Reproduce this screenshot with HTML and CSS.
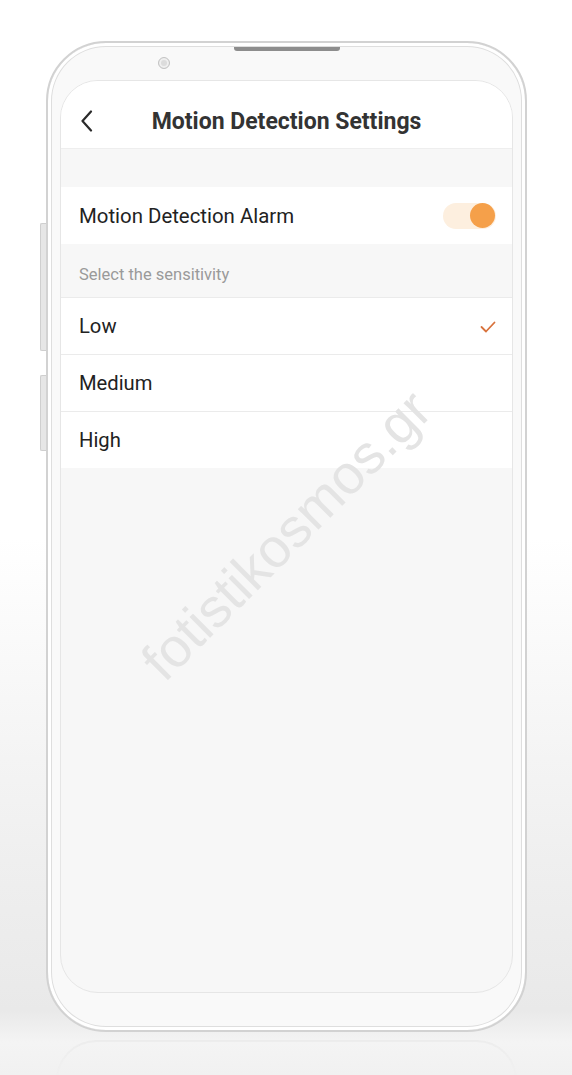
FILE: index.html
```html
<!DOCTYPE html>
<html lang="en">
<head>
<meta charset="UTF-8" />
<meta name="viewport" content="width=device-width, initial-scale=1" />
<title>Motion Detection Settings</title>
<link rel="stylesheet" href="styles.css">
</head>
<body>

<div class="phone">
  <div class="side-btn side-btn-top"></div>
  <div class="side-btn side-btn-bottom"></div>
  <div class="speaker"></div>
  <div class="camera"></div>

  <div class="screen">
    <div class="header">
      <svg class="back" width="14" height="22" viewBox="0 0 14 22">
        <path d="M11 1.5 L2.5 11 L11 20.5" fill="none" stroke="#2b2b2b" stroke-width="2.2" stroke-linecap="round" stroke-linejoin="round"/>
      </svg>
      <div class="title">Motion Detection Settings</div>
    </div>

    <div class="spacer"></div>

    <div class="row alarm-row">
      <span>Motion Detection Alarm</span>
      <div class="toggle"><div class="knob"></div></div>
    </div>

    <div class="section-label">Select the sensitivity</div>

    <div class="list">
      <div class="row item">
        <span>Low</span>
        <svg class="check" width="16" height="12" viewBox="0 0 16 12">
          <path d="M1.5 6 L6 10.5 L14.5 1.5" fill="none" stroke="#d8723c" stroke-width="1.8" stroke-linecap="round" stroke-linejoin="round"/>
        </svg>
      </div>
      <div class="row item"><span>Medium</span></div>
      <div class="row item"><span>High</span></div>
    </div>

    <div class="watermark">fotistikosmos.gr</div>
  </div>
</div>

<div class="reflection"></div>

</body>
</html>
```

FILE: styles.css
```css
  body, html {
    margin: 0; padding: 0;
    height: 100%;
    overflow: hidden;
  }

  body {
    background: linear-gradient(#ffffff 0%, #ffffff 50%, #efefef 80%, #e9e9e9 94%, #f4f4f4 97%, #f1f1f1 100%);
    font-family: Roboto, "Noto Sans", sans-serif;
    padding-top: 41px;
    box-sizing: border-box;
  }

  .phone {
    position: relative;
    margin-left: 46px;
    width: 481px;
    height: 991px;
    box-sizing: border-box;
    border: 2px solid #d2d2d2;
    border-radius: 60px;
    background: #f9f9f9;
    box-shadow: inset 0 0 0 3px #ffffff, inset 0 0 0 4px #dedede;
    padding: 37px 12px 0 12px;
  }

  .side-btn {
    position: absolute;
    left: -8px;
    width: 5px;
    background: #e6e6e6;
    border: 1px solid #cfcfcf;
    border-right: none;
    border-radius: 2px 0 0 2px;
  }
  .side-btn-top { top: 180px; height: 126px; }
  .side-btn-bottom { top: 332px; height: 74px; }

  .speaker {
    position: absolute;
    top: 4px;
    left: 186px;
    width: 106px;
    height: 4px;
    background: #8d8d8d;
    border-radius: 0 0 3px 3px;
  }

  .camera {
    position: absolute;
    top: 14px;
    left: 110px;
    width: 10px;
    height: 10px;
    border-radius: 50%;
    background: #dcdcdc;
    border: 1px solid #c4c4c4;
    box-shadow: inset 0 0 0 2px #efefef;
  }

  .screen {
    position: relative;
    height: 913px;
    box-sizing: border-box;
    border: 1px solid #e6e6e6;
    border-radius: 38px;
    background: #f7f7f7;
    overflow: hidden;
  }

  .header {
    height: 67px;
    background: #fff;
    border-bottom: 1px solid #eeeeee;
    display: flex;
    align-items: center;
    justify-content: center;
    position: relative;
  }

  .back {
    position: absolute;
    left: 19px;
    top: 29px;
  }

  .title {
    font-size: 23px;
    font-weight: 700;
    color: #333;
    margin-top: 13px;
  }

  .spacer { height: 38px; }

  .row {
    background: #fff;
    display: flex;
    align-items: center;
    justify-content: space-between;
    padding: 0 16px 0 18px;
    color: #222;
  }

  .alarm-row {
    height: 57px;
    font-size: 20.4px;
  }

  .toggle {
    width: 52px;
    height: 26px;
    border-radius: 13px;
    background: #fdefdf;
    display: flex;
    align-items: center;
    justify-content: flex-end;
    padding-right: 1px;
  }

  .knob {
    width: 25px;
    height: 25px;
    border-radius: 50%;
    background: #f5a04a;
  }

  .section-label {
    height: 53px;
    box-sizing: border-box;
    padding: 21px 0 0 18px;
    font-size: 16.5px;
    color: #9a9a9a;
  }

  .item {
    height: 56px;
    border-top: 1px solid #ebebeb;
    font-size: 20.2px;
  }

  .check { margin-top: 2px; }

  /* watermark over the screen */
  .watermark {
    position: absolute;
    left: 34px;
    top: 422px;
    font-family: "Liberation Sans", Arial, sans-serif;
    font-size: 55px;
    color: #e4e4e4;
    transform: rotate(-45deg);
    pointer-events: none;
    white-space: nowrap;
  }

  .reflection {
    margin: 8px 0 0 56px;
    width: 461px;
    height: 40px;
    box-sizing: border-box;
    border: 2px solid #ececec;
    border-bottom: none;
    border-radius: 60px 60px 0 0;
    -webkit-mask-image: linear-gradient(#000, transparent);
    mask-image: linear-gradient(#000, transparent);
  }
```
